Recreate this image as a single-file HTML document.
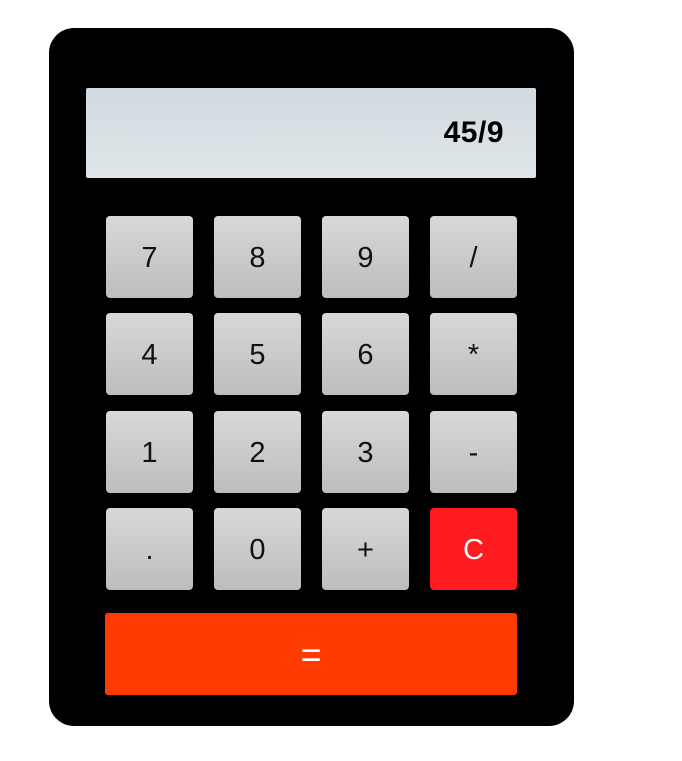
<!DOCTYPE html>
<html><head><style>
body{margin:0;background:#fff;width:682px;height:761px;position:relative;font-family:"Liberation Sans",Arial,sans-serif;}
.calc{position:absolute;left:49px;top:28px;width:525px;height:698px;background:#000;border-radius:25px;}
.disp{position:absolute;left:86px;top:88px;width:450px;height:90px;background:linear-gradient(#d1dbe1,#dfe5e8);border-radius:2px;}
.disp span{position:absolute;right:32px;top:28px;font-size:30px;font-weight:bold;color:#000;letter-spacing:0.5px;}
.b{position:absolute;width:87px;height:82px;box-sizing:border-box;padding-top:3px;border-radius:4px;background:linear-gradient(#d8d8d8,#bdbdbd);font-size:29px;color:#111;display:flex;align-items:center;justify-content:center;}
.c{background:#ff1b1f;color:#fff;}
.eq{position:absolute;left:105px;top:613px;width:412px;height:82px;box-sizing:border-box;padding-top:2px;background:#ff3a00;border-radius:3px;color:#fff;font-size:36px;display:flex;align-items:center;justify-content:center;}
</style></head><body>
<div class="calc"></div>
<div class="disp"><span>45/9</span></div>
<div class="b" style="left:106px;top:216px">7</div>
<div class="b" style="left:214px;top:216px">8</div>
<div class="b" style="left:322px;top:216px">9</div>
<div class="b" style="left:430px;top:216px">/</div>
<div class="b" style="left:106px;top:313px">4</div>
<div class="b" style="left:214px;top:313px">5</div>
<div class="b" style="left:322px;top:313px">6</div>
<div class="b" style="left:430px;top:313px">*</div>
<div class="b" style="left:106px;top:411px">1</div>
<div class="b" style="left:214px;top:411px">2</div>
<div class="b" style="left:322px;top:411px">3</div>
<div class="b" style="left:430px;top:411px">-</div>
<div class="b" style="left:106px;top:508px">.</div>
<div class="b" style="left:214px;top:508px">0</div>
<div class="b" style="left:322px;top:508px">+</div>
<div class="b c" style="left:430px;top:508px">C</div>
<div class="eq">=</div>
</body></html>
